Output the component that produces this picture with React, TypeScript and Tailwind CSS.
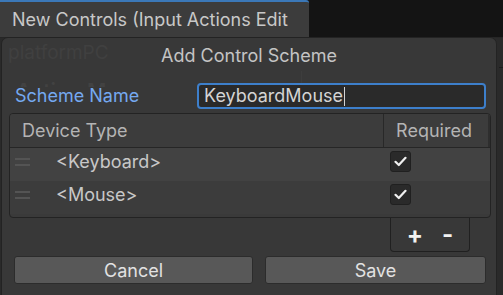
import React from "react";

function Check() {
  return (
    <div className="w-[21px] h-[21px] rounded-[3px] bg-[#2a2a2a] border border-[#202020] flex items-center justify-center">
      <svg width="13" height="11" viewBox="0 0 13 11" fill="none">
        <path d="M1.5 5.8 L4.8 9 L11.5 1.8" stroke="#f0f0f0" strokeWidth="2.2" strokeLinecap="round" strokeLinejoin="round" />
      </svg>
    </div>
  );
}

function Handle() {
  return (
    <div className="w-[15px] flex flex-col gap-[4px]">
      <div className="h-[2px] bg-[#545454]" />
      <div className="h-[2px] bg-[#545454]" />
    </div>
  );
}

function Row({ label, bg }: { label: string; bg: string }) {
  return (
    <div className={`h-[33px] flex items-start pt-[3px] ${bg}`}>
      <div className="w-[374px] h-[21px] flex items-center pl-[5px]">
        <Handle />
        <span className="ml-[26px] text-[18px] leading-none text-[#c8c8c8]">{label}</span>
      </div>
      <div className="h-[21px] pl-[6px]">
        <Check />
      </div>
    </div>
  );
}

export default function App() {
  return (
    <div
      className="relative w-[503px] h-[295px] overflow-hidden bg-[#2a2a2a]"
      style={{ fontFamily: "Inter, 'Noto Sans', sans-serif" }}
    >
      {/* tab bar */}
      <div className="h-[37px] bg-[#141414] flex">
        <div className="w-[309px] h-[37px] bg-[#3c3c3c] border-t-2 border-[#3b78b8] rounded-tr-[3px] flex items-center pl-[12px] text-[18px] text-[#c8c8c8]">
          New Controls (Input Actions Edit
        </div>
      </div>
      <div className="h-[1px] bg-[#262626]" />
      <div className="absolute right-0 top-[67px] w-[4px] h-[1px] bg-[#1c1c1c]" />

      {/* dialog */}
      <div className="absolute left-[1px] top-[37px] w-[496px] h-[270px] bg-[#383838] border border-[#232323] rounded-t-[7px] flex flex-col">
        <div className="absolute left-[6px] top-[2px] text-[19px] text-[#404040] leading-[26px]">platformPC</div>
        <div className="absolute left-[14px] top-[41px] h-[8px] overflow-hidden">
          <div className="text-[21px] font-semibold text-[#424242] leading-[26px]">Action Maps</div>
        </div>
        <div className="absolute left-[299px] top-[33px] w-[1px] h-[12px] bg-[#3d3d3d]" />

        <div className="relative h-[35px] flex items-center justify-center text-[18px] text-[#c4c4c4]">
          Add Control Scheme
        </div>

        <div className="relative mt-[10px] h-[26px] flex items-center pl-[13px]">
          <div className="w-[182px] text-[18px] leading-none text-[#75a9f0]">Scheme Name</div>
          <div className="w-[289px] h-[26px] rounded-[4px] border-2 border-[#3d7fcb] bg-[#2a2a2a] flex items-center pl-[5px] text-[18px] leading-none text-[#d4d4d4]">
            KeyboardMouse
            <span className="ml-[1px] w-[1px] h-[19px] bg-[#d4d4d4]" />
          </div>
        </div>

        <div className="relative mt-[4px] ml-[7px] w-[482px] border border-[#232323] rounded-[4px] bg-[#3a3a3a] overflow-hidden">
          <div className="h-[34px] flex bg-[#3c3c3c] border-b border-[#262626]">
            <div className="w-[374px] border-r border-[#282828] flex items-center pl-[12px] text-[18px] text-[#b4b4b4]">
              Device Type
            </div>
            <div className="flex-1 flex items-center justify-center pr-[4px] text-[18px] text-[#b4b4b4] border-r-2 border-[#2e2e2e]">
              Required
            </div>
          </div>
          <Row label="<Keyboard>" bg="bg-[#424242]" />
          <Row label="<Mouse>" bg="bg-[#3c3c3c]" />
          <div className="h-[3px]" />
        </div>

        <div className="relative ml-[388px] w-[80px] h-[34px] border-x border-b border-[#202020] rounded-b-[4px] flex items-center justify-center gap-[19px] text-[#f2f2f2] font-bold">
          <span className="text-[24px] leading-none">+</span>
          <span className="text-[24px] leading-none">-</span>
        </div>

        <div className="relative mt-[4px] flex">
          <div className="ml-[12px] w-[239px] h-[28px] rounded-[3px] bg-[#585858] border border-[#2c2c2c] flex items-center justify-center text-[18px] text-[#e2e2e2]">
            Cancel
          </div>
          <div className="ml-[12px] w-[221px] h-[28px] rounded-[3px] bg-[#585858] border border-[#2c2c2c] flex items-center justify-center text-[18px] text-[#e2e2e2]">
            Save
          </div>
        </div>
      </div>
    </div>
  );
}
